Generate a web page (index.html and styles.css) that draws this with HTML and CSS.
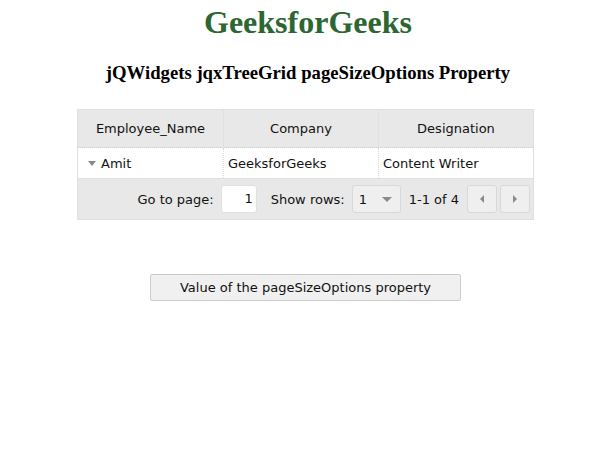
FILE: index.html
```html
<!DOCTYPE html>
<html>
<head>
<meta charset="utf-8">
<link rel="stylesheet" href="styles.css">
</head>
<body>
<h1 class="title">GeeksforGeeks</h1>
<h3 class="subtitle">jQWidgets jqxTreeGrid pageSizeOptions Property</h3>
<div class="grid">
  <div class="row header">
    <div class="cell c1">Employee_Name</div>
    <div class="cell c2">Company</div>
    <div class="cell c3">Designation</div>
  </div>
  <div class="row data">
    <div class="cell c1"><span class="toggle"></span>Amit</div>
    <div class="cell c2">GeeksforGeeks</div>
    <div class="cell c3">Content Writer</div>
  </div>
  <div class="pager">
    <span class="label">Go to page:</span>
    <div class="page-input">1</div>
    <span class="label rows-label">Show rows:</span>
    <div class="dropdown"><span>1</span><span class="down"></span></div>
    <span class="label range">1-1 of 4</span>
    <div class="nav-btn"><span class="left"></span></div>
    <div class="nav-btn"><span class="right"></span></div>
  </div>
</div>
<div class="btn-wrap">
  <div class="value-btn">Value of the pageSizeOptions property</div>
</div>
</body>
</html>
```

FILE: styles.css
```css
html, body {
  margin: 0;
  padding: 0;
  background: #ffffff;
}
body {
  width: 616px;
  height: 458px;
  overflow: hidden;
}
.title {
  margin: 5px 0 0 0;
  font-family: "Liberation Serif", serif;
  font-size: 32px;
  font-weight: bold;
  color: #2c6630;
  text-align: center;
  line-height: 35px;
}
.subtitle {
  margin: 22px 0 0 0;
  font-family: "Liberation Serif", serif;
  font-size: 18.72px;
  font-weight: bold;
  color: #000;
  text-align: center;
  line-height: 21px;
}
.grid {
  margin: 26px 0 0 77px;
  width: 455px;
  border: 1px solid #e0e0e0;
  font-family: "DejaVu Sans", Verdana, sans-serif;
  font-size: 13px;
  color: #111;
}
.row {
  display: flex;
}
.header {
  height: 37px;
  background: #e8e8e8;
  border-bottom: 1px dotted #cfcfcf;
}
.header .cell {
  justify-content: center;
}
.data {
  height: 30px;
  background: #ffffff;
  border-bottom: 1px solid #e0e0e0;
}
.cell {
  display: flex;
  align-items: center;
  box-sizing: border-box;
  border-right: 1px solid #e0e0e0;
}
.data .cell {
  border-right: 1px dotted #d8d8d8;
  padding-left: 4px;
}
.c1 { width: 146px; }
.c2 { width: 155px; }
.c3 { width: 154px; border-right: none !important; }
.data .c1 { padding-left: 10px; }
.toggle {
  width: 0;
  height: 0;
  border-left: 4px solid transparent;
  border-right: 4px solid transparent;
  border-top: 5px solid #8a8a8a;
  margin-right: 5px;
}
.pager {
  height: 40px;
  background: #e8e8e8;
  display: flex;
  align-items: center;
  justify-content: flex-end;
  padding-right: 3px;
}
.label {
  margin-right: 7px;
}
.rows-label {
  margin-left: 14px;
}
.page-input {
  width: 31px;
  height: 26px;
  background: #ffffff;
  border: 1px solid #e0e0e0;
  border-radius: 3px;
  text-align: right;
  line-height: 26px;
  padding-right: 3px;
}
.dropdown {
  width: 49px;
  height: 28px;
  background: #efefef;
  border: 1px solid #d8d8d8;
  border-radius: 3px;
  display: flex;
  align-items: center;
  justify-content: space-between;
  padding: 0 8px 0 6px;
  box-sizing: border-box;
  margin-right: 8px;
}
.down {
  width: 0;
  height: 0;
  border-left: 5px solid transparent;
  border-right: 5px solid transparent;
  border-top: 5px solid #8a8a8a;
}
.range {
  margin-right: 5px;
}
.nav-btn {
  width: 30px;
  height: 28px;
  box-sizing: border-box;
  background: #efefef;
  border: 1px solid #d8d8d8;
  border-radius: 3px;
  display: flex;
  align-items: center;
  justify-content: center;
  margin-left: 3px;
}
.left {
  width: 0;
  height: 0;
  border-top: 4px solid transparent;
  border-bottom: 4px solid transparent;
  border-right: 4px solid #8a8a8a;
}
.right {
  width: 0;
  height: 0;
  border-top: 4px solid transparent;
  border-bottom: 4px solid transparent;
  border-left: 4px solid #8a8a8a;
}
.btn-wrap {
  margin-top: 54px;
  padding-left: 150px;
}
.value-btn {
  width: 311px;
  height: 27px;
  box-sizing: border-box;
  background: #f0f0f0;
  border: 1px solid #cccccc;
  border-radius: 2px;
  font-family: "DejaVu Sans", Verdana, sans-serif;
  font-size: 13px;
  color: #111;
  display: flex;
  align-items: center;
  justify-content: center;
}
```
